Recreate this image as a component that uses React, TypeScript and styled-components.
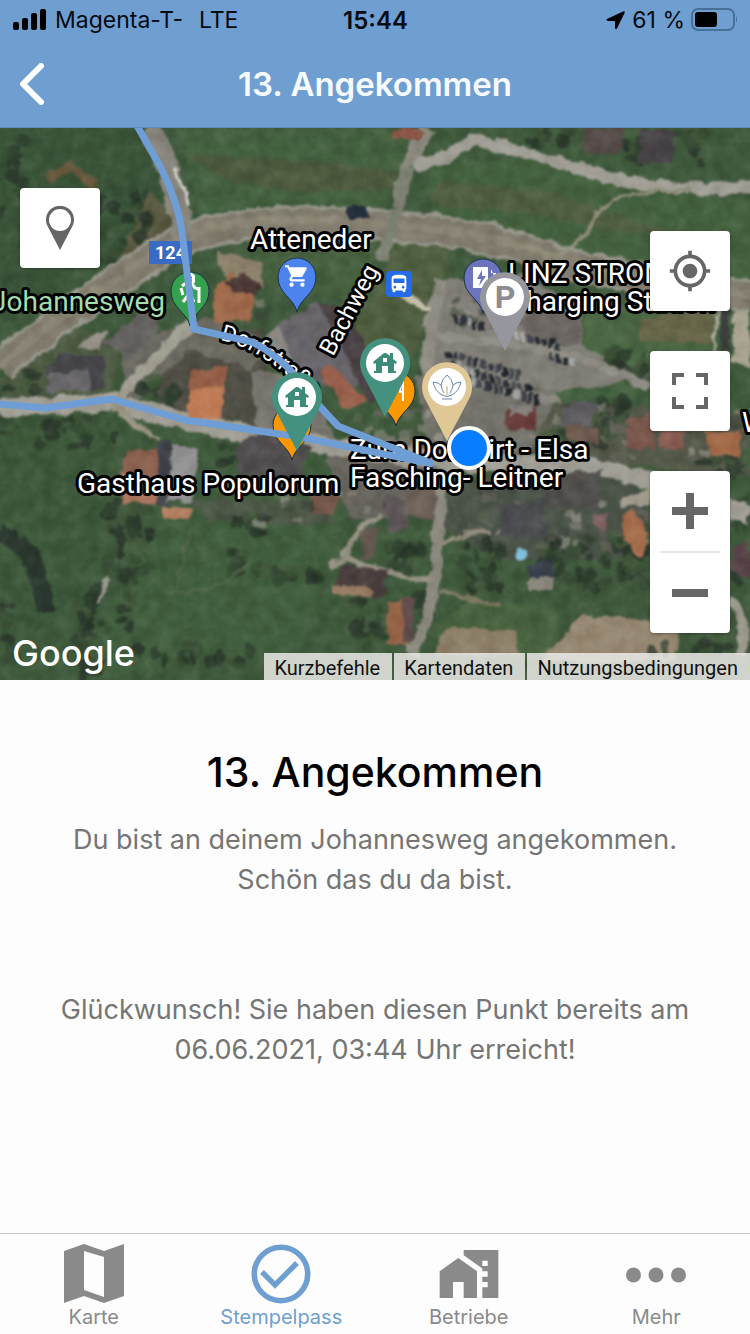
import React from 'react';
import styled, { createGlobalStyle } from 'styled-components';
import { MdHomeWork, MdShoppingCart, MdDirectionsBus, MdGpsFixed } from 'react-icons/md';

const GlobalStyle = createGlobalStyle`
  * { box-sizing: border-box; }
  body { margin: 0; background: #fdfdfd; font-family: Inter, "Liberation Sans", sans-serif; }
  h1, h2, p { margin: 0; font-weight: 400; }
  button { border: 0; padding: 0; background: none; font: inherit; color: inherit; cursor: pointer; }
`;

const Screen = styled.div`
  min-height: 100vh;
  display: flex;
  flex-direction: column;
`;

const Header = styled.header`
  background: #6f9fd1;
  border-bottom: 1px solid #5f8cba;
`;

const StatusBar = styled.div`
  display: grid;
  grid-template-columns: 1fr auto 1fr;
  align-items: center;
  height: 40px;
  padding: 0 12px 0 13px;
  font-size: 23px;
  color: #060b12;
`;

const StatusGroup = styled.div<{ $end?: boolean }>`
  display: flex;
  align-items: center;
  gap: ${(p) => (p.$end ? 6 : 8)}px;
  justify-content: ${(p) => (p.$end ? 'flex-end' : 'flex-start')};
  white-space: nowrap;
`;

const Network = styled.span`
  margin-left: 8px;
`;

const Clock = styled.time`
  font-size: 24px;
  font-weight: 600;
`;

const NavBar = styled.div`
  display: grid;
  grid-template-columns: 64px 1fr 64px;
  align-items: center;
  height: 87px;
`;

const BackButton = styled.button`
  display: flex;
  align-items: center;
  height: 64px;
  padding-left: 19px;
`;

const NavTitle = styled.h2`
  text-align: center;
  color: #f7fbff;
  font-size: 33px;
  line-height: 40px;
  font-weight: 600;
`;

const MapPanel = styled.section`
  position: relative;
  height: 552px;
  overflow: hidden;
  background: #3f5b40;
`;

const MapCanvas = styled.svg`
  display: block;
  width: 100%;
  height: 100%;
`;

const Controls = styled.div<{ $side: 'left' | 'right' }>`
  position: absolute;
  ${(p) => p.$side}: 20px;
  top: ${(p) => (p.$side === 'left' ? 60 : 103)}px;
  display: flex;
  flex-direction: column;
  gap: 40px;
`;

const ControlCard = styled.div`
  width: 80px;
  background: #fff;
  border-radius: 4px;
  box-shadow: 0 1px 3px rgba(0, 0, 0, 0.3);
  color: #666;
`;

const ControlButton = styled.button`
  display: flex;
  align-items: center;
  justify-content: center;
  width: 80px;
  height: 80px;
`;

const Divider = styled.div`
  height: 2px;
  margin: 0 10px;
  background: #e6e6e6;
`;

const Attribution = styled.div`
  position: absolute;
  right: 0;
  bottom: 0;
  display: flex;
  gap: 2px;
`;

const AttributionItem = styled.button`
  height: 27px;
  padding: 2px 12px 0 10px;
  background: rgba(236, 236, 232, 0.84);
  font-family: Roboto, sans-serif;
  font-size: 20px;
  line-height: 24px;
  color: #111;
`;

const Content = styled.main`
  flex: 1;
  display: flex;
  flex-direction: column;
  align-items: center;
  padding: 64px 48px 48px;
  text-align: center;
`;

const Title = styled.h1`
  margin-bottom: 20px;
  color: #000;
  font-size: 41px;
  line-height: 56px;
  font-weight: 500;
`;

const Message = styled.p`
  margin-bottom: 90px;
  color: #757575;
  font-size: 27px;
  line-height: 40px;
`;

const TabBar = styled.nav`
  display: grid;
  grid-template-columns: repeat(4, 1fr);
  height: 101px;
  border-top: 1px solid #c9c9c9;
`;

const Tab = styled.a<{ $active?: boolean }>`
  display: flex;
  flex-direction: column;
  align-items: center;
  padding-top: 9px;
  color: ${(p) => (p.$active ? '#6f9fd1' : '#8a8a8a')};
  font-size: 20px;
  line-height: 24px;
  text-decoration: none;
`;

const TabIcon = styled.span`
  display: flex;
  align-items: center;
  justify-content: center;
  height: 62px;
`;

const MapLabel = styled.text<{ $tone?: string; $size?: number }>`
  font-family: Roboto, sans-serif;
  font-size: ${(p) => p.$size ?? 28}px;
  fill: ${(p) => p.$tone ?? '#fff'};
  stroke: #000;
  stroke-width: 6px;
  stroke-linejoin: round;
  paint-order: stroke;
`;

const Wordmark = styled.text`
  font-family: Inter, sans-serif;
  font-size: 36px;
  font-weight: 500;
  fill: #fff;
`;

type Patch = [points: string, fill: string];

const fields: Patch[] = [
  ['0,128 140,128 178,215 90,262 0,330', '#3a5439'],
  ['180,128 420,128 400,185 370,216 260,206 200,214', '#43603f'],
  ['185,155 250,158 410,172 395,190 310,192 230,182', '#4d5a3e'],
  ['430,165 520,158 640,190 750,200 750,292 540,240 430,218', '#44613f'],
  ['440,182 540,190 620,215 690,238 620,232 520,212 430,205', '#4f5d40'],
  ['0,410 110,410 105,510 80,610 0,650', '#3d583b'],
  ['165,510 340,480 330,560 300,650 100,680 110,600', '#415e3e'],
  ['60,320 120,345 110,400 0,400 0,380', '#4e5b43'],
  ['180,330 260,330 280,440 150,410', '#504f45'],
  ['190,500 340,500 330,525 210,520', '#4d5746'],
  ['230,245 380,240 372,300 330,300 240,280', '#47603f'],
  ['215,250 262,262 262,290 225,275', '#8b8069'],
  ['400,240 450,250 435,330 365,310', '#506040'],
  ['355,300 430,310 412,360 350,350', '#4f5e3f'],
  ['585,310 718,300 712,378 575,376', '#4a6643'],
  ['640,320 715,305 712,345 640,340', '#666548'],
  ['545,372 640,385 630,412 540,396', '#43603f'],
  ['500,395 750,415 750,480 640,465 500,455', '#54594a'],
  ['445,480 620,475 650,500 640,560 500,560 445,530', '#4c544a'],
  ['440,622 470,600 560,610 555,655 430,680', '#48623f'],
  ['582,614 678,624 675,662 540,662', '#968872'],
  ['445,627 515,630 520,655 432,656', '#8e8068'],
  ['500,590 750,560 750,655 680,655 680,620 580,612', '#40583c'],
  ['735,310 750,305 750,370 732,362', '#a9a392'],
];

const paved: Patch[] = [
  ['448,280 520,274 582,308 580,345 650,378 560,392 420,375', '#807e76'],
  ['415,375 560,390 530,450 430,455', '#74736b'],
  ['528,302 580,314 578,346 522,340', '#6c6762'],
  ['120,350 205,315 275,345 250,370 190,350 130,408', '#6b6a61'],
  ['250,370 310,380 340,450 260,450', '#77756d'],
  ['320,440 450,440 450,490 400,520 350,520', '#67655e'],
];

const buildings: Patch[] = [
  ['280,325 318,300 370,372 352,390 300,380', '#67646a'],
  ['280,325 300,380 280,362 262,340', '#8a8783'],
  ['318,300 342,310 395,385 370,405', '#4a4245'],
  ['318,372 330,364 368,402 345,410', '#98604d'],
  ['214,288 232,272 258,288 250,320 214,322', '#a06a4c'],
  ['225,280 245,272 260,284 256,296 232,292', '#4b3735'],
  ['102,342 150,306 160,330 128,360', '#656361'],
  ['74,348 88,336 108,330 98,350', '#958f85'],
  ['46,368 60,354 105,356 106,388 50,390', '#45454a'],
  ['50,374 88,370 90,390 45,392', '#69676a'],
  ['190,372 227,366 224,386 188,390', '#96604a'],
  ['189,390 224,386 222,420 188,418', '#be7a54'],
  ['125,451 158,449 158,503 125,503', '#8a5f4d'],
  ['122,470 158,494 155,505 124,504', '#ac7560'],
  ['158,444 171,440 171,505 158,505', '#404249'],
  ['171,443 198,447 191,502 169,500', '#929392'],
  ['164,507 192,507 187,521 164,521', '#b37f62'],
  ['235,445 270,430 310,448 300,480 240,480', '#514e4f'],
  ['310,495 340,495 335,514 312,514', '#75574a'],
  ['385,495 405,500 408,530 388,532', '#5f5759'],
  ['405,490 437,485 434,520 410,518', '#6d6158'],
  ['362,530 378,528 374,558 360,558', '#65584f'],
  ['340,565 388,570 382,598 335,592', '#4b403f'],
  ['334,585 372,588 370,598 334,595', '#94795f'],
  ['388,602 412,598 410,645 386,645', '#966549'],
  ['402,600 415,598 412,640 404,645', '#5f4c4b'],
  ['390,130 425,128 420,140 395,140', '#8a5544'],
  ['582,128 626,128 618,154 584,150', '#554b48'],
  ['642,128 675,132 672,164 637,162', '#484346'],
  ['506,410 536,406 535,430 508,430', '#673c39'],
  ['510,407 532,405 532,414 510,414', '#85817d'],
  ['563,405 595,400 592,427 560,426', '#605e62'],
  ['565,425 600,430 598,445 568,440', '#6e594f'],
  ['628,420 650,414 655,450 626,448', '#7b584d'],
  ['660,430 685,430 683,448 660,446', '#875a4f'],
  ['704,432 738,430 740,455 710,456', '#a46d4c'],
  ['540,475 602,470 598,510 545,505', '#504f4c'],
  ['500,505 542,500 548,536 502,538', '#4c4d51'],
  ['528,566 552,560 555,580 528,582', '#363e48'],
  ['528,580 553,577 552,590 528,590', '#8d897f'],
  ['620,514 634,510 648,535 643,558 625,540', '#a36b49'],
  ['595,514 608,516 604,530 594,526', '#7d6260'],
  ['625,495 650,488 650,505 620,508', '#a09a8d'],
  ['733,548 750,540 750,580 733,570', '#584448'],
];

const roads: [d: string, stroke: string, width: number][] = [
  ['M0 366 Q90 296 175 243 Q250 212 380 226 Q470 230 540 254 T750 296', '#96958a', 33],
  ['M0 366 Q90 296 175 243 Q250 212 380 226 Q470 230 540 254 T750 296', '#807b6c', 26],
  ['M0 364 Q90 294 175 241 Q250 210 380 224 Q470 228 540 252 T750 294', '#8b8575', 8],
  ['M148 128 Q174 168 184 240', '#87857c', 22],
  ['M175 168 L190 206', '#d7d5cb', 3],
  ['M408 166 L382 262', '#7e8273', 13],
  ['M428 128 Q412 152 412 166', '#8b897e', 16],
  ['M415 163 Q440 166 470 140 Q520 150 590 172 T750 187', '#a09e95', 12],
  ['M690 190 Q610 192 600 210 T576 245 T520 246', '#8f8e79', 4],
  ['M112 400 L150 365 L195 320', '#a29f93', 11],
  ['M0 408 L112 402 Q200 428 300 442 T460 464 Q570 458 640 478 T750 516', '#a19e95', 18],
  ['M112 408 L150 435', '#9a9686', 6],
  ['M442 278 Q425 340 428 380', '#8f8d84', 13],
  ['M442 480 L436 560 Q434 610 412 655', '#8c8a7e', 12],
  ['M382 516 Q350 530 345 558 L330 566 M345 558 Q380 570 400 576 T435 574', '#949182', 6],
  ['M442 545 Q470 530 490 533', '#918d7e', 5],
  ['M440 590 Q470 602 500 604', '#7c7962', 4],
  ['M112 402 Q145 430 160 440', '#94927f', 4],
  ['M165 592 Q220 595 250 562', '#51654a', 3],
  ['M190 530 L175 590', '#51654a', 3],
  ['M432 336 Q520 342 580 360 T648 388', '#8f8d84', 9],
  ['M440 372 Q500 395 560 400', '#89877f', 7],
  ['M730 600 Q748 620 742 655', '#9c998d', 10],
];

const treeTones = ['#2c3c2e', '#354a33', '#283429', '#42583a'];

const groves: [x: number, y: number, w: number, h: number, count: number][] = [
  [0, 140, 30, 75, 22],
  [85, 180, 65, 85, 34],
  [0, 290, 80, 20, 9],
  [0, 415, 120, 35, 26],
  [105, 500, 45, 80, 40],
  [75, 590, 25, 85, 34],
  [0, 600, 14, 60, 12],
  [120, 580, 16, 50, 9],
  [225, 550, 18, 25, 12],
  [135, 645, 115, 20, 18],
  [235, 515, 30, 20, 9],
  [258, 565, 58, 14, 9],
  [382, 540, 40, 30, 16],
  [418, 585, 14, 50, 12],
  [355, 600, 25, 50, 16],
  [455, 545, 50, 50, 30],
  [545, 535, 80, 55, 50],
  [625, 540, 25, 50, 18],
  [590, 400, 40, 35, 15],
  [540, 430, 60, 15, 12],
  [605, 352, 20, 12, 12],
  [625, 360, 20, 12, 8],
  [140, 380, 35, 30, 14],
  [220, 425, 30, 40, 14],
  [520, 125, 50, 20, 10],
  [625, 130, 15, 34, 8],
  [680, 130, 22, 36, 12],
  [700, 455, 50, 20, 10],
  [735, 500, 15, 90, 12],
  [640, 645, 110, 10, 12],
  [5, 370, 35, 25, 7],
];

const noise = (n: number) => {
  const v = Math.sin(n * 91.7) * 43758.5453;
  return v - Math.floor(v);
};

const Trees = () => (
  <>
    {groves.flatMap(([x, y, w, h, count], g) =>
      Array.from({ length: count }, (_, i) => {
        const s = g * 100 + i * 3;
        return (
          <ellipse
            key={s}
            cx={x + noise(s) * w}
            cy={y + noise(s + 1) * h}
            rx={3 + noise(s + 2) * 6}
            ry={3 + noise(s + 4) * 6}
            fill={treeTones[(i + g) % 4]}
            opacity="0.75"
          />
        );
      }),
    )}
    <path d="M0 533 Q42 550 45 612" stroke="#2b382f" strokeWidth="17" fill="none" />
  </>
);

const yards: [x: number, y: number, w: number, h: number, count: number][] = [
  [455, 485, 190, 60, 50],
  [500, 400, 240, 55, 50],
  [255, 480, 130, 45, 26],
  [200, 270, 80, 60, 10],
  [340, 405, 100, 50, 26],
  [445, 290, 80, 35, 20],
];
const yardTones = ['#8d8b81', '#3a4138', '#5d6654', '#6d6660', '#a19e94', '#44503e'];

const Yards = () => (
  <>
    {yards.flatMap(([x, y, w, h, count], g) =>
      Array.from({ length: count }, (_, i) => {
        const s = 5000 + g * 300 + i * 4;
        return (
          <rect
            key={s}
            x={x + noise(s) * w}
            y={y + noise(s + 1) * h}
            width={4 + noise(s + 2) * 9}
            height={3 + noise(s + 3) * 8}
            fill={yardTones[Math.floor(noise(s + 5) * 6)]}
            opacity="0.6"
          />
        );
      }),
    )}
  </>
);

const carRows: [x: number, y: number, count: number][] = [
  [452, 314, 5], [514, 330, 7], [446, 350, 11], [448, 362, 12], [464, 376, 11], [548, 352, 4],
];
const carTones = ['#2b2f37', '#a5a6a6', '#40434b', '#23272e', '#34373f'];

const Cars = () => (
  <>
    {carRows.flatMap(([x, y, count], r) =>
      Array.from({ length: count }, (_, i) => (
        <rect
          key={`${r}-${i}`}
          x={x + i * 7}
          y={y + i * 2}
          width="5"
          height="9"
          rx="1"
          fill={carTones[Math.floor(noise(r * 20 + i) * 5)]}
        />
      )),
    )}
  </>
);

const Terrain = () => (
  <g filter="url(#grain)">
    <rect x="-20" y="100" width="790" height="600" fill="#405a3d" />
    {fields.map(([points, fill]) => <polygon key={points} points={points} fill={fill} />)}
    {paved.map(([points, fill]) => <polygon key={points} points={points} fill={fill} />)}
    <path d="M48 180 L70 165 L98 190" stroke="#66573c" strokeWidth="9" fill="none" />
    <path d="M150 192 L176 215 L178 238 L120 258Z" fill="#5a5941" />
    <Trees />
    <Yards />
    {roads.map(([d, stroke, width], i) => (
      <path key={i} d={d} stroke={stroke} strokeWidth={width} fill="none" />
    ))}
    {buildings.map(([points, fill]) => <polygon key={points} points={points} fill={fill} />)}
    <path d="M718 305 L714 352" stroke="#aaa797" strokeWidth="3" />
    <path d="M726 305 L724 352" stroke="#3c3e40" strokeWidth="9" />
    <path d="M398 294 L430 308" stroke="#c4bda8" strokeWidth="6" />
    <path d="M108 577 L98 602" stroke="#99988f" strokeWidth="4" />
    <rect x="347" y="207" width="21" height="10" fill="#242f3e" />
    <circle cx="522" cy="553" r="6" fill="#80bedb" />
    <Cars />
  </g>
);

interface PinProps {
  x: number;
  y: number;
  color: string;
  children?: React.ReactNode;
}

const StationPin = ({ x, y, color, children }: PinProps) => (
  <g transform={`translate(${x} ${y})`}>
    <path d="M0 54 L-22 12 A25 25 0 1 1 22 12Z" fill={color} />
    <circle r="19" fill="#fff" />
    {children}
  </g>
);

const PlacePin = ({ x, y, color, children }: PinProps) => (
  <g transform={`translate(${x} ${y})`}>
    <path
      d="M0 35 C-3 21 -19 17 -19 0 A19 19 0 0 1 19 0 C19 17 3 21 0 35Z"
      fill={color}
      stroke="#1d3142"
      strokeWidth="1"
    />
    {children}
  </g>
);

const House = () => (
  <path
    fill="#3d8b79"
    fillRule="evenodd"
    d="M-11 1 L-12 -1 L-1 -10 H1 L5 -7 V-10 H8 V-4 L12 -1 L11 1 L9 0 V8 H11 V10 H3 V3 H-3 V10 H-11 V8 H-9 V0Z M-2 -5 V-1 H2 V-5Z"
  />
);

const Fork = () => (
  <path d="M-7 -9 V-2 H-3 V10 M-3 -9 V-2 H1 V-9 M7 10 V-9 Q4 -7 4 1 H7" stroke="#fff" strokeWidth="2" fill="none" />
);

const SatelliteMap = () => (
  <MapCanvas viewBox="0 128 750 552" preserveAspectRatio="xMidYMid slice" role="img" aria-label="Satellitenkarte">
    <defs>
      <filter id="grain" x="0" y="0" width="100%" height="100%" colorInterpolationFilters="sRGB">
        <feTurbulence type="fractalNoise" baseFrequency="0.07" numOctaves="4" seed="8" result="n" />
        <feDisplacementMap in="SourceGraphic" in2="n" scale="10" xChannelSelector="R" yChannelSelector="G" result="rough" />
        <feGaussianBlur in="rough" stdDeviation="0.8" result="soft" />
        <feColorMatrix in="n" values="0.25 0 0 0 0.375  0.25 0 0 0 0.375  0.25 0 0 0 0.375  0 0 0 0 1" result="shade" />
        <feBlend in="shade" in2="soft" mode="soft-light" />
      </filter>
      <path id="dorfstrasse" d="M220 340 Q262 348 312 398" />
    </defs>
    <Terrain />

    <rect x="149" y="241" width="43" height="23" fill="#3a6bc4" />
    <text x="155" y="259" fontFamily="Roboto, sans-serif" fontSize="18" fontWeight="700" fill="#fff">124</text>
    <MapLabel x="250" y="249">Atteneder</MapLabel>
    <MapLabel x="165" y="311" textAnchor="end" $tone="#a5dcb0">Johannesweg</MapLabel>
    <MapLabel transform="translate(333 357) rotate(-62)" $size={24}>Bachweg</MapLabel>
    <MapLabel $size={23}>
      <textPath href="#dorfstrasse">Dorfstraße</textPath>
    </MapLabel>
    <MapLabel x="508" y="283">LINZ STROM</MapLabel>
    <MapLabel x="508" y="311">Charging Station</MapLabel>
    <MapLabel x="77" y="493">Gasthaus Populorum</MapLabel>
    <MapLabel x="350" y="459">Zum Dorfwirt - Elsa</MapLabel>
    <MapLabel x="350" y="487">Fasching- Leitner</MapLabel>
    <MapLabel x="742" y="432">W</MapLabel>

    <PlacePin x={297} y={277} color="#4c83ec">
      <MdShoppingCart x={-13} y={-14} size={26} color="#fff" />
    </PlacePin>
    <PlacePin x={190} y={291} color="#35a04f">
      <path
        d="M-2 -12 a3 3 0 1 1 5 0 a3 3 0 1 1 -5 0 M-8 -5 L-4 -8 L2 -7 L5 -3 L9 -2 M0 -6 L-1 3 L-7 11 M0 3 L4 11 M9 -4 V12 M-9 -3 L-7 4"
        stroke="#fff"
        strokeWidth="3"
        fill="none"
      />
    </PlacePin>
    <PlacePin x={483} y={278} color="#6b74bd">
      <path d="M-10 -11 H5 V8 H7 V10 H-10Z M8 -9 V-5 H13 V2" fill="#fff" />
      <path d="M-1 -8 L-6 1 H-2 L-4 8 L3 -2 H-1Z" fill="#6b74bd" />
    </PlacePin>
    <PlacePin x={396} y={391} color="#fb9800"><Fork /></PlacePin>
    <PlacePin x={292} y={425} color="#fb9800"><Fork /></PlacePin>
    <rect x="386" y="271" width="26" height="26" rx="4" fill="#246bea" />
    <MdDirectionsBus x={388} y={273} size={22} color="#fff" />

    <g fill="none" stroke="#6f9ed6" strokeWidth="7" strokeLinejoin="round">
      <path d="M136 124 L160 166 Q178 202 182 232 L194 329 L252 342 Q288 360 310 396 L338 426 L433 464" />
      <path d="M0 404 L45 408 L112 399 L185 420 L300 437 L433 464" />
    </g>

    <StationPin x={385} y={363} color="#45917f"><House /></StationPin>
    <StationPin x={297} y={397} color="#45917f"><House /></StationPin>
    <StationPin x={505} y={297} color="#96969f">
      <text y="11" textAnchor="middle" fontFamily="Roboto, sans-serif" fontSize="32" fontWeight="700" fill="#8b8b94">P</text>
    </StationPin>
    <StationPin x={447} y={387} color="#dfc895">
      <g fill="none" stroke="#6588ad" strokeWidth="1">
        <path d="M-5 8 Q-12 4 -14 -5 Q-10 -5 -6 -2 Q-5 -8 0 -12 Q5 -8 6 -2 Q10 -5 14 -5 Q12 4 5 8 Q0 11 -5 8Z M-6 -2 Q-5 3 -3 6 M6 -2 Q5 3 3 6 M-5 12 H5" />
        <path d="M0 -1 V8" stroke="#caa66b" />
      </g>
    </StationPin>
    <circle cx="469" cy="448" r="20" fill="#087dff" stroke="#fff" strokeWidth="4" />
    <Wordmark x="12" y="666">Google</Wordmark>
  </MapCanvas>
);

const MapIcon = () => (
  <svg width="60" height="60" viewBox="0 0 60 60" aria-hidden="true">
    <path fill="currentColor" fillRule="evenodd" d="M0 7 L20 0 L40 7 L60 0 V52 L40 59 L20 52 L0 59Z M20 7 L40 13 V53 L20 46Z" />
  </svg>
);

const CheckIcon = () => (
  <svg width="60" height="60" viewBox="0 0 60 60" fill="none" stroke="currentColor" aria-hidden="true">
    <circle cx="30" cy="30" r="26.7" strokeWidth="5.6" />
    <path d="M11 28 L24 41 L46 19" strokeWidth="5.4" />
  </svg>
);

const MoreIcon = () => (
  <svg width="60" height="60" viewBox="0 0 60 60" fill="currentColor" aria-hidden="true">
    <circle cx="7.5" cy="31" r="7.5" />
    <circle cx="30" cy="31" r="7.5" />
    <circle cx="52.5" cy="31" r="7.5" />
  </svg>
);

const tabs = [
  { label: 'Karte', icon: <MapIcon /> },
  { label: 'Stempelpass', icon: <CheckIcon />, active: true },
  { label: 'Betriebe', icon: <MdHomeWork size={64} /> },
  { label: 'Mehr', icon: <MoreIcon /> },
];

export default function App() {
  return (
    <Screen>
      <GlobalStyle />
      <Header>
        <StatusBar>
          <StatusGroup>
            <svg width="34" height="22" viewBox="0 0 34 22" aria-hidden="true">
              <rect x="0" y="13" width="6" height="8" rx="2" />
              <rect x="9" y="9" width="6" height="12" rx="2" />
              <rect x="18" y="4" width="6" height="17" rx="2" />
              <rect x="27" y="0" width="6" height="21" rx="2" />
            </svg>
            <span>Magenta-T-</span>
            <Network>LTE</Network>
          </StatusGroup>
          <Clock>15:44</Clock>
          <StatusGroup $end>
            <svg width="20" height="20" viewBox="0 0 20 20" aria-hidden="true">
              <path d="M1 9 L17 1.500 Q19.500 0.500 18.500 3 L11 18.500 Q9.500 20 9 18 V11 H2 Q-0.500 10.500 1 9Z" />
            </svg>
            <span>61 %</span>
            <svg width="47" height="24" viewBox="0 0 47 24" aria-hidden="true">
              <rect x="1" y="1" width="42" height="21" rx="6" fill="none" stroke="#486f98" strokeWidth="2" />
              <rect x="4" y="4" width="22" height="15" rx="3" />
              <path d="M45 8 Q47 11 45 15Z" fill="#486f98" />
            </svg>
          </StatusGroup>
        </StatusBar>
        <NavBar>
          <BackButton aria-label="Zurück">
            <svg width="26" height="42" viewBox="0 0 26 42" fill="none" stroke="#fff" strokeWidth="6" strokeLinecap="round" strokeLinejoin="round" aria-hidden="true">
              <path d="M22 3 L4 21 L22 39" />
            </svg>
          </BackButton>
          <NavTitle>13. Angekommen</NavTitle>
        </NavBar>
      </Header>

      <MapPanel>
        <SatelliteMap />
        <Controls $side="left">
          <ControlCard>
            <ControlButton aria-label="Punkt anzeigen">
              <svg width="28" height="44" viewBox="0 0 28 44" aria-hidden="true">
                <path fill="currentColor" fillRule="evenodd" d="M14 44 L2 21 A14 14 0 1 1 26 21Z M14 3 A11 11 0 1 0 14 25 A11 11 0 1 0 14 3Z" />
              </svg>
            </ControlButton>
          </ControlCard>
        </Controls>
        <Controls $side="right">
          <ControlCard>
            <ControlButton aria-label="Mein Standort">
              <MdGpsFixed size={44} />
            </ControlButton>
          </ControlCard>
          <ControlCard>
            <ControlButton aria-label="Vollbild">
              <svg width="36" height="36" viewBox="0 0 36 36" fill="none" stroke="currentColor" strokeWidth="4" aria-hidden="true">
                <path d="M2 12 V2 H12 M24 2 H34 V12 M34 24 V34 H24 M12 34 H2 V24" />
              </svg>
            </ControlButton>
          </ControlCard>
          <ControlCard>
            <ControlButton aria-label="Vergrößern">
              <svg width="36" height="36" viewBox="0 0 36 36" stroke="currentColor" strokeWidth="8" aria-hidden="true">
                <path d="M0 18 H36 M18 0 V36" />
              </svg>
            </ControlButton>
            <Divider />
            <ControlButton aria-label="Verkleinern">
              <svg width="36" height="36" viewBox="0 0 36 36" stroke="currentColor" strokeWidth="8" aria-hidden="true">
                <path d="M0 18 H36" />
              </svg>
            </ControlButton>
          </ControlCard>
        </Controls>
        <Attribution>
          <AttributionItem>Kurzbefehle</AttributionItem>
          <AttributionItem>Kartendaten</AttributionItem>
          <AttributionItem>Nutzungsbedingungen</AttributionItem>
        </Attribution>
      </MapPanel>

      <Content>
        <Title>13. Angekommen</Title>
        <Message>
          Du bist an deinem Johannesweg angekommen.
          <br />
          Schön das du da bist.
        </Message>
        <Message>
          Glückwunsch! Sie haben diesen Punkt bereits am
          <br />
          06.06.2021, 03:44 Uhr erreicht!
        </Message>
      </Content>

      <TabBar>
        {tabs.map((tab) => (
          <Tab key={tab.label} href="#" $active={tab.active} aria-current={tab.active ? 'page' : undefined}>
            <TabIcon>{tab.icon}</TabIcon>
            {tab.label}
          </Tab>
        ))}
      </TabBar>
    </Screen>
  );
}
